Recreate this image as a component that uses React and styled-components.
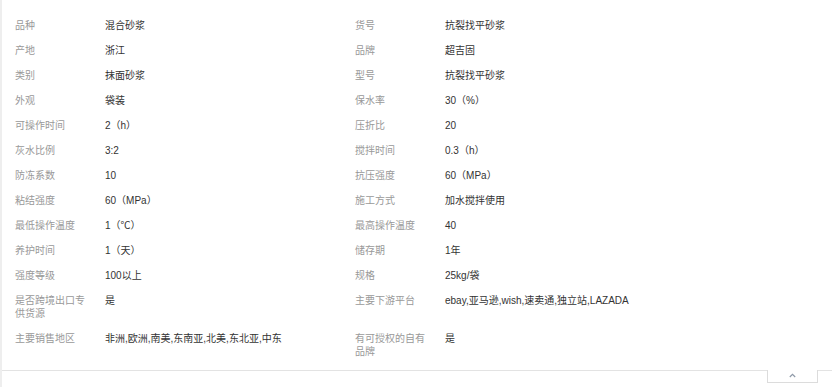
import styled, { createGlobalStyle } from "styled-components"

const GlobalStyle = createGlobalStyle`
  html, body {
    margin: 0;
    background: #fff;
  }
  body {
    font-family: "Liberation Sans", "Noto Sans CJK SC", sans-serif;
  }
`

const Page = styled.div`
  min-height: 100vh;
  border-left: 2px solid #eeeeee;
  box-sizing: border-box;
`

const Panel = styled.div`
  position: relative;
  border-bottom: 1px solid #e3e3e3;
  padding: 19px 0 12px 13px;
`

const Grid = styled.div`
  display: grid;
  grid-template-columns: 340px 340px;
  row-gap: 12px;
`

const Item = styled.div`
  display: flex;
  font-size: 10px;
  line-height: 13px;
`

const Label = styled.div`
  width: 78px;
  padding-right: 12px;
  flex-shrink: 0;
  color: #999;
`

const Value = styled.div`
  color: #333;
  flex: 1;
`

const Toggle = styled.button`
  position: absolute;
  right: 14px;
  top: 100%;
  width: 51px;
  height: 13px;
  margin: 0;
  padding: 3px 0 0;
  background: #fff;
  border: 1px solid #dcdcdc;
  border-top: none;
  box-sizing: border-box;
  display: flex;
  justify-content: center;
  align-items: flex-start;
  cursor: pointer;
`

const specs = [
  ["品种", "混合砂浆"],
  ["货号", "抗裂找平砂浆"],
  ["产地", "浙江"],
  ["品牌", "超吉固"],
  ["类别", "抹面砂浆"],
  ["型号", "抗裂找平砂浆"],
  ["外观", "袋装"],
  ["保水率", "30（%）"],
  ["可操作时间", "2（h）"],
  ["压折比", "20"],
  ["灰水比例", "3:2"],
  ["搅拌时间", "0.3（h）"],
  ["防冻系数", "10"],
  ["抗压强度", "60（MPa）"],
  ["粘结强度", "60（MPa）"],
  ["施工方式", "加水搅拌使用"],
  ["最低操作温度", "1（℃）"],
  ["最高操作温度", "40"],
  ["养护时间", "1（天）"],
  ["储存期", "1年"],
  ["强度等级", "100以上"],
  ["规格", "25kg/袋"],
  ["是否跨境出口专供货源", "是"],
  ["主要下游平台", "ebay,亚马逊,wish,速卖通,独立站,LAZADA"],
  ["主要销售地区", "非洲,欧洲,南美,东南亚,北美,东北亚,中东"],
  ["有可授权的自有品牌", "是"],
]

export default function App() {
  return (
    <Page>
      <GlobalStyle />
      <Panel>
        <Grid>
          {specs.map(([label, value]) => (
            <Item key={label}>
              <Label>{label}</Label>
              <Value>{value}</Value>
            </Item>
          ))}
        </Grid>
        <Toggle aria-label="收起">
          <svg width="7" height="5" viewBox="0 0 7 5">
            <polyline
              points="0.8,4 3.5,1.3 6.2,4"
              fill="none"
              stroke="#8e99a8"
              strokeWidth="1.2"
            />
          </svg>
        </Toggle>
      </Panel>
    </Page>
  )
}
